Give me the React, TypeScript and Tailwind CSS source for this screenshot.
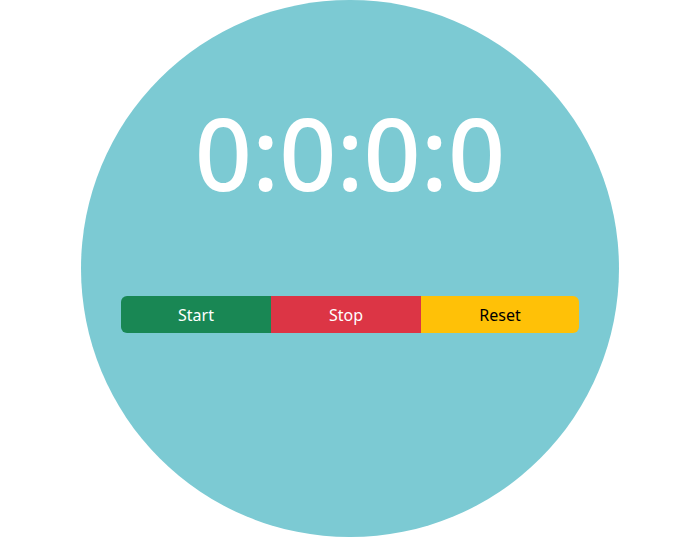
export default function App() {
  return (
    <div className="w-[694px] h-[540px] bg-white overflow-hidden flex justify-center" style={{ fontFamily: '"Noto Sans", "Open Sans", sans-serif' }}>
      <div className="ml-[6px] w-[538px] h-[537px] shrink-0 rounded-full bg-[#7ccad3] flex flex-col items-center">
        <div className="mt-[92px] text-white text-[100px] font-medium leading-[1.2]">0:0:0:0</div>
        <div className="mt-[84px] flex w-[458px] h-[37px] text-[16px]">
          <button className="w-[150px] bg-[#198754] text-white rounded-l-[6px]">Start</button>
          <button className="w-[150px] bg-[#dc3545] text-white">Stop</button>
          <button className="w-[158px] bg-[#ffc107] text-black rounded-r-[6px]">Reset</button>
        </div>
      </div>
    </div>
  );
}
